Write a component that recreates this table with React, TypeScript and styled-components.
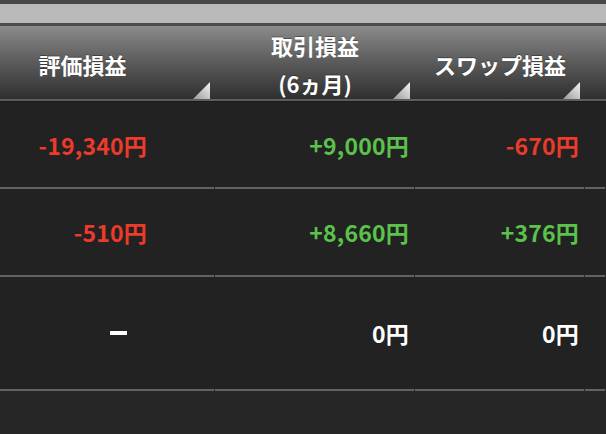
import React from "react";
import styled, { createGlobalStyle } from "styled-components";

const GlobalStyle = createGlobalStyle`
  html, body {
    margin: 0;
    padding: 0;
    background: #262626;
    font-family: "Noto Sans CJK JP", "Liberation Sans", sans-serif;
  }
`;

const COLS = "215px 200px 170px 1fr";

const Page = styled.div`
  width: 606px;
  height: 434px;
  overflow: hidden;
  background: #262626;
`;

const TopStrip = styled.div`
  height: 19px;
  background: #b9b9b9;
  border-top: 4px solid #474747;
  border-bottom: 3px solid #4b4b4b;
`;

const HeaderRow = styled.div`
  display: grid;
  grid-template-columns: ${COLS};
  height: 73px;
  background: linear-gradient(#8b8b8b 0%, #5f5f5f 45%, #2f2f2f 100%);
  border-bottom: 2px solid #5e5e5e;
`;

const HeaderCell = styled.div<{ $shift?: number }>`
  position: relative;
  display: flex;
  flex-direction: column;
  align-items: center;
  justify-content: center;
  padding-right: ${(p) => p.$shift ?? 0}px;
  color: #ffffff;
  font-weight: 700;
  font-size: 22px;
  line-height: 38px;
  text-shadow: 0 -1px 0 rgba(0, 0, 0, 0.35);
`;

const SortMark = styled.svg`
  position: absolute;
  right: 5px;
  bottom: 3px;
  width: 17px;
  height: 17px;
`;

const Body = styled.div`
  background: #222222;
  border-top: 1px solid #1a1a1a;
`;

const Row = styled.div<{ $h: number }>`
  display: grid;
  grid-template-columns: ${COLS};
  height: ${(p) => p.$h}px;
`;

const Cell = styled.div<{ $pad: number }>`
  position: relative;
  display: flex;
  align-items: center;
  justify-content: flex-end;
  padding-right: ${(p) => p.$pad}px;
  border-bottom: 2px solid #626262;

  &::after {
    content: "";
    position: absolute;
    right: 0;
    bottom: -2px;
    width: 1px;
    height: 3px;
    background: #2a2a2a;
  }
`;

const Value = styled.span<{ $tone: "red" | "green" | "white" }>`
  font-weight: 700;
  font-size: 23px;
  letter-spacing: 0.2px;
  color: ${(p) =>
    p.$tone === "red" ? "#ec3a2b" : p.$tone === "green" ? "#5bc24b" : "#ffffff"};
`;

const Dash = styled.span`
  display: inline-block;
  width: 17px;
  height: 4px;
  background: #ffffff;
  margin-right: 20px;
`;

const Sort = () => (
  <SortMark viewBox="0 0 17 17">
    <defs>
      <linearGradient id="sg" x1="0" y1="1" x2="1" y2="0">
        <stop offset="0" stopColor="#9a9a9a" />
        <stop offset="1" stopColor="#f4f4f4" />
      </linearGradient>
    </defs>
    <polygon points="0,17 17,17 17,0" fill="url(#sg)" />
  </SortMark>
);

type Tone = "red" | "green" | "white";
type CellData = { text: string; tone: Tone } | null;

const rows: { h: number; cells: CellData[] }[] = [
  {
    h: 87,
    cells: [
      { text: "-19,340円", tone: "red" },
      { text: "+9,000円", tone: "green" },
      { text: "-670円", tone: "red" },
    ],
  },
  {
    h: 88,
    cells: [
      { text: "-510円", tone: "red" },
      { text: "+8,660円", tone: "green" },
      { text: "+376円", tone: "green" },
    ],
  },
  {
    h: 114,
    cells: [null, { text: "0円", tone: "white" }, { text: "0円", tone: "white" }],
  },
];

const pads = [68, 6, 6];

export default function App() {
  return (
    <Page>
      <GlobalStyle />
      <TopStrip />
      <HeaderRow>
        <HeaderCell $shift={50}>
          <span>評価損益</span>
          <Sort />
        </HeaderCell>
        <HeaderCell>
          <span>取引損益</span>
          <span>(6ヵ月)</span>
          <Sort />
        </HeaderCell>
        <HeaderCell>
          <span>スワップ損益</span>
          <Sort />
        </HeaderCell>
        <HeaderCell />
      </HeaderRow>
      <Body>
        {rows.map((r, i) => (
          <Row key={i} $h={r.h}>
            {r.cells.map((c, j) => (
              <Cell key={j} $pad={pads[j]}>
                {c ? <Value $tone={c.tone}>{c.text}</Value> : <Dash />}
              </Cell>
            ))}
            <Cell $pad={0} />
          </Row>
        ))}
      </Body>
    </Page>
  );
}
